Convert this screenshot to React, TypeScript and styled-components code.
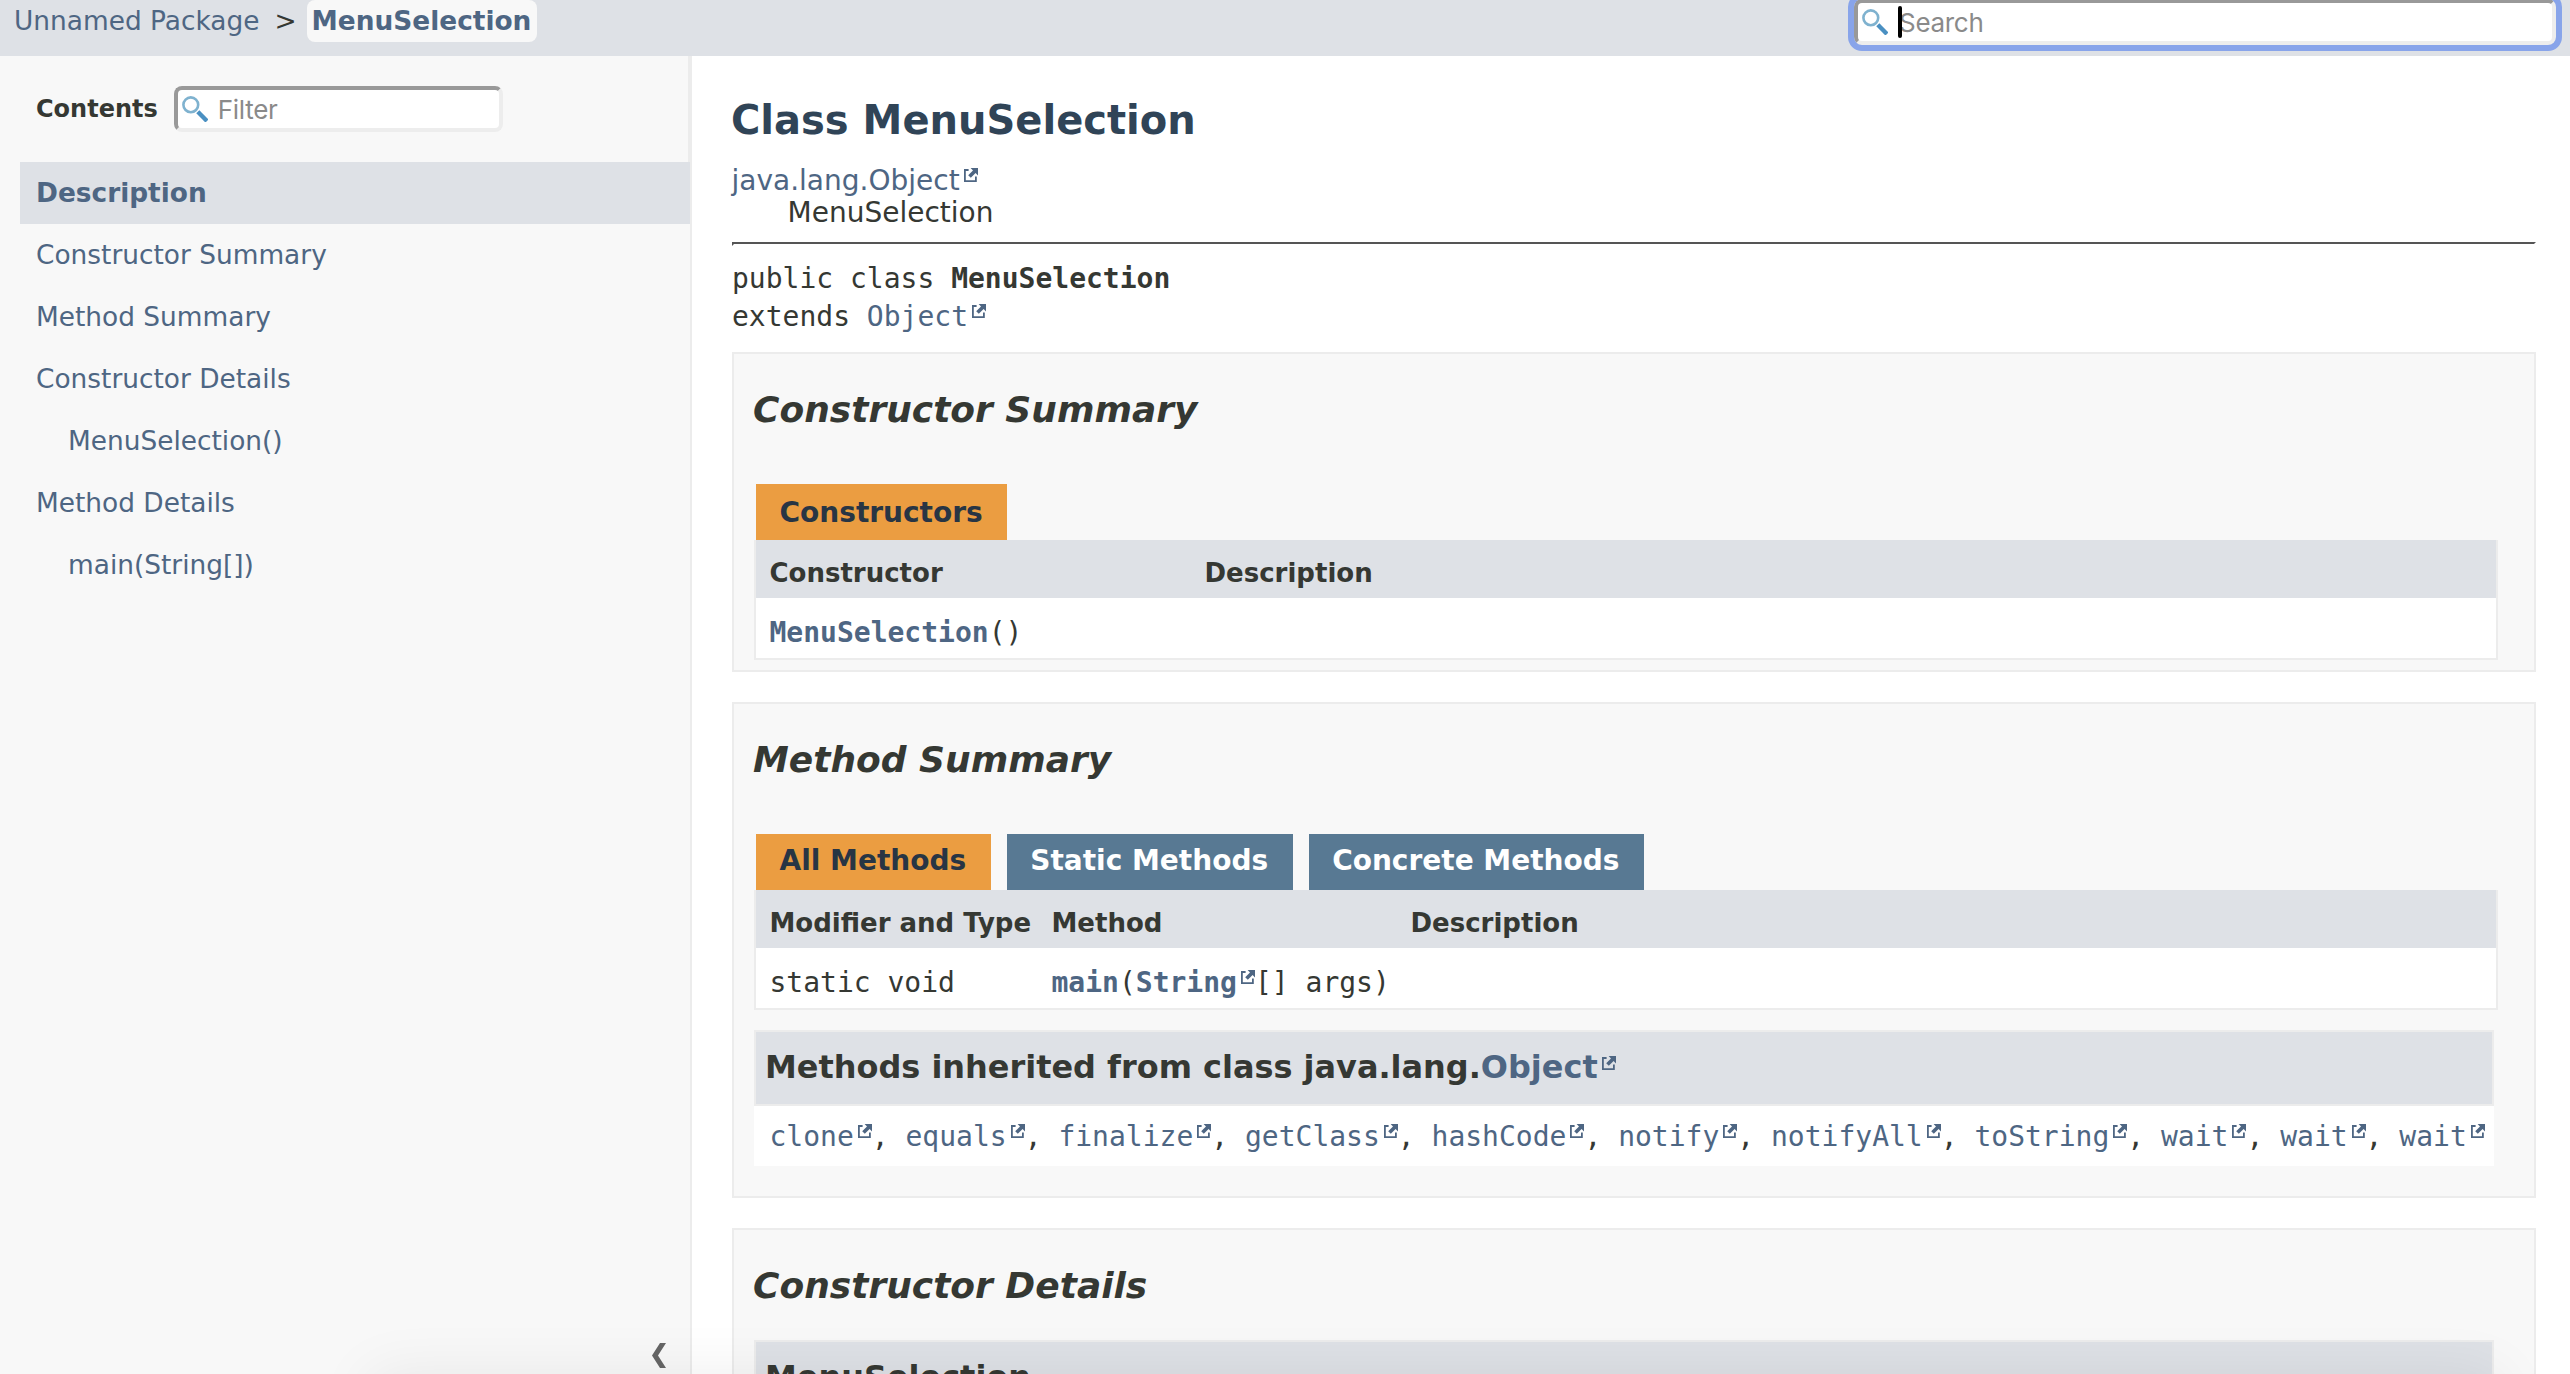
import React from "react";
import styled, { createGlobalStyle } from "styled-components";

const color = {
  text: "#353833",
  link: "#4e6683",
  title: "#304457",
  bar: "#dee1e6",
  panel: "#f8f8f8",
  border: "#ececec",
  tab: "#587993",
  active: "#eb9d41",
  activeText: "#283544",
};
const sans = `"DejaVu Sans", Arial, Helvetica, sans-serif`;
const mono = `"DejaVu Sans Mono", "Liberation Mono", monospace`;

const GlobalStyle = createGlobalStyle`
  * { box-sizing: border-box; }
  body { margin: 0; background: #fff; color: ${color.text}; font-family: ${sans}; font-size: 28px; }
  h1, h2, h3, ul { margin: 0; padding: 0; }
`;

const Page = styled.div`
  height: 1374px;
  overflow: hidden;
  display: flex;
  flex-direction: column;
  position: relative;
`;
const TopBar = styled.header`
  flex: 0 0 56px;
  display: flex;
  justify-content: space-between;
  align-items: flex-start;
  background: ${color.bar};
  padding: 0 14px;
`;
const Crumbs = styled.nav`
  display: flex;
  font-size: 26.4px;
  line-height: 42px;
`;
const Separator = styled.span`
  margin: 0 10px 0 15px;
`;
const CurrentCrumb = styled.a`
  height: 42px;
  padding: 0 6px 0 5px;
  border-radius: 8px;
  background: ${color.panel};
  color: ${color.link};
  font-weight: bold;
`;
const Link = styled.a<{ $bold?: boolean }>`
  color: ${color.link};
  text-decoration: none;
  font-weight: ${(p) => (p.$bold ? "bold" : "inherit")};
`;

const Field = styled.label<{ $width: number; $focused?: boolean }>`
  display: flex;
  align-items: center;
  width: ${(p) => p.$width}px;
  height: 46px;
  margin-top: ${(p) => (p.$focused ? "-1px" : "0")};
  padding-left: 4px;
  background: #fff;
  border: 4px solid;
  border-color: #999 #ededed #ededed #999;
  border-radius: 8px;
  outline: ${(p) => (p.$focused ? "6px solid #88a4ea" : "none")};
`;
const FieldText = styled.span`
  margin-left: 10px;
  padding-top: 2px;
  font-family: Inter, "Liberation Sans", sans-serif;
  font-size: 26px;
  font-weight: normal;
  letter-spacing: -0.3px;
  line-height: 36px;
  color: #8a8a8a;
`;
const Caret = styled.span`
  width: 4px;
  height: 32px;
  margin: 0 -13px 0 10px;
  border-radius: 2px;
  background: #000;
  z-index: 1;
`;

const Body = styled.div`
  flex: 1;
  min-height: 0;
  display: flex;
`;
const Sidebar = styled.aside`
  flex: 0 0 692px;
  display: flex;
  flex-direction: column;
  background: ${color.panel};
  border-right: 2px solid ${color.border};
`;
const TocHeader = styled.div`
  height: 106px;
  display: flex;
  align-items: center;
  gap: 16px;
  padding-left: 36px;
  border-right: 2px solid ${color.border};
  font-size: 24px;
  font-weight: bold;
`;
const Toc = styled.ul`
  list-style: none;
  flex: 1;
  margin-left: 20px;
`;
const TocItem = styled.li<{ $active?: boolean; $nested?: boolean }>`
  height: 62px;
  line-height: 62px;
  padding-left: ${(p) => (p.$nested ? 48 : 16)}px;
  font-size: 26.4px;
  color: ${color.link};
  background: ${(p) => (p.$active ? color.bar : "transparent")};
  font-weight: ${(p) => (p.$active ? "bold" : "normal")};
`;
const CollapseButton = styled.div`
  display: flex;
  justify-content: flex-end;
  padding: 0 24px 6px 0;
`;

const Main = styled.main`
  flex: 1;
  min-width: 0;
  overflow: hidden;
  padding: 40px 34px 0 40px;
`;
const Title = styled.h1`
  margin-left: -1px;
  font-size: 40px;
  line-height: 48px;
  color: ${color.title};
`;
const Inheritance = styled.div`
  margin: 21px 0 0 -0.5px;
  line-height: 32px;
`;
const Indented = styled.div`
  padding-left: 56px;
`;
const Rule = styled.hr`
  height: 4px;
  margin: 13px 0 14px;
  border: 2px solid;
  border-color: #555 #fff #fff #555;
`;
const Signature = styled.div`
  margin: 0 0 16px;
  font-family: ${mono};
  line-height: 38px;
`;
const Section = styled.section<{ $bottom?: number }>`
  margin-bottom: 30px;
  padding: 34px 36px ${(p) => p.$bottom ?? 10}px 18px;
  background: ${color.panel};
  border: 2px solid ${color.border};
`;
const SectionTitle = styled.h2`
  padding-left: 1px;
  font-size: 36px;
  font-style: italic;
  line-height: 43px;
`;
const Tabs = styled.div`
  display: flex;
  gap: 16px;
  margin: 53px 0 0 4px;
`;
const Tab = styled.div<{ $active?: boolean; $line?: number }>`
  height: 56px;
  padding: 0 24.5px 0 23.5px;
  line-height: ${(p) => p.$line ?? 58}px;
  font-weight: bold;
  color: ${(p) => (p.$active ? color.activeText : "#fff")};
  background: ${(p) => (p.$active ? color.active : color.tab)};
`;
const Table = styled.div<{ $columns: string }>`
  display: grid;
  grid-template-columns: ${(p) => p.$columns};
  margin-left: 2px;
  border: 2px solid ${color.border};
  border-top: 0;
  background: #fff;
`;
const HeadCell = styled.div`
  height: 58px;
  padding: 8px 0 0 13.5px;
  line-height: 50px;
  font-size: 26px;
  font-weight: bold;
  background: ${color.bar};
  white-space: nowrap;
`;
const Cell = styled.div`
  height: 60px;
  padding: 9px 0 0 13.5px;
  line-height: 51px;
  font-family: ${mono};
  white-space: nowrap;
`;
const Inherited = styled.div<{ $gap: number }>`
  margin: ${(p) => p.$gap}px 4px 0 2px;
`;
const InheritedTitle = styled.h3`
  height: 76px;
  padding-left: 9px;
  line-height: 70px;
  font-size: 31.95px;
  background: ${color.bar};
  border: 2px solid ${color.border};
`;
const InheritedList = styled.div`
  height: 60px;
  line-height: 62px;
  padding-left: 15.5px;
  font-family: ${mono};
  white-space: nowrap;
  background: #fff;
`;
const ExternalSvg = styled.svg`
  display: inline-block;
  width: 14px;
  height: 14px;
  margin: 0 0 8px 4px;
`;
/* Soft shade that rises from below the window's lower edge. */
const BottomShade = styled.div`
  position: absolute;
  top: 1374px;
  left: 370px;
  right: 70px;
  height: 200px;
  box-shadow: 0 0 56px rgba(0, 0, 0, 0.07);
  pointer-events: none;
`;

const ExternalIcon = () => (
  <ExternalSvg viewBox="0 0 14 14" fill="none">
    <path d="M4.6 2H0.9V13.1H11.9V8.6" stroke={color.link} strokeWidth="1.8" />
    <path d="M6.6 0H14V7.4L11.6 5L6.8 9.8L4.2 7.2L9 2.4Z" fill={color.link} />
  </ExternalSvg>
);
const SearchIcon = () => (
  <svg width="26" height="26" viewBox="0 0 26 26" fill="none">
    <circle cx="8.8" cy="8.8" r="7.4" stroke="#7fb2cf" strokeWidth="2.6" />
    <path d="M15.8 15.8L25 25" stroke="#4a90c2" strokeWidth="4.4" />
  </svg>
);
const External = ({ children, bold }: { children: React.ReactNode; bold?: boolean }) => (
  <Link $bold={bold}>
    {children}
    <ExternalIcon />
  </Link>
);

const toc = [
  { label: "Description", active: true },
  { label: "Constructor Summary" },
  { label: "Method Summary" },
  { label: "Constructor Details" },
  { label: "MenuSelection()", nested: true },
  { label: "Method Details" },
  { label: "main(String[])", nested: true },
];
const inherited = [
  "clone", "equals", "finalize", "getClass", "hashCode", "notify",
  "notifyAll", "toString", "wait", "wait", "wait",
];

export default function App() {
  return (
    <Page>
      <GlobalStyle />
      <TopBar>
        <Crumbs>
          <Link>Unnamed Package</Link>
          <Separator>&gt;</Separator>
          <CurrentCrumb>MenuSelection</CurrentCrumb>
        </Crumbs>
        <Field $width={702} $focused>
          <SearchIcon />
          <Caret />
          <FieldText>Search</FieldText>
        </Field>
      </TopBar>
      <Body>
        <Sidebar>
          <TocHeader>
            Contents
            <Field $width={329}>
              <SearchIcon />
              <FieldText>Filter</FieldText>
            </Field>
          </TocHeader>
          <Toc>
            {toc.map((item) => (
              <TocItem key={item.label} $active={item.active} $nested={item.nested}>
                {item.label}
              </TocItem>
            ))}
          </Toc>
          <CollapseButton>
            <svg width="14" height="25" viewBox="0 0 14 25">
              <path d="M8 0H14L6 12.5L14 25H8L0 12.5Z" fill="#666" />
            </svg>
          </CollapseButton>
        </Sidebar>
        <Main>
          <Title>Class MenuSelection</Title>
          <Inheritance>
            <External>java.lang.Object</External>
            <Indented>MenuSelection</Indented>
          </Inheritance>
          <Rule />
          <Signature>
            public class <b>MenuSelection</b>
            <br />
            extends <External>Object</External>
          </Signature>

          <Section>
            <SectionTitle>Constructor Summary</SectionTitle>
            <Tabs>
              <Tab $active>Constructors</Tab>
            </Tabs>
            <Table $columns="435px 1fr">
              <HeadCell>Constructor</HeadCell>
              <HeadCell>Description</HeadCell>
              <Cell>
                <Link $bold>MenuSelection</Link>()
              </Cell>
              <Cell />
            </Table>
          </Section>

          <Section $bottom={30}>
            <SectionTitle>Method Summary</SectionTitle>
            <Tabs>
              <Tab $active $line={54}>All Methods</Tab>
              <Tab $line={54}>Static Methods</Tab>
              <Tab $line={54}>Concrete Methods</Tab>
            </Tabs>
            <Table $columns="282px 359px 1fr">
              <HeadCell>Modifier and Type</HeadCell>
              <HeadCell>Method</HeadCell>
              <HeadCell>Description</HeadCell>
              <Cell>static void</Cell>
              <Cell>
                <Link $bold>main</Link>(<External bold>String</External>[] args)
              </Cell>
              <Cell />
            </Table>
            <Inherited $gap={20}>
              <InheritedTitle>
                Methods inherited from class java.lang.<External>Object</External>
              </InheritedTitle>
              <InheritedList>
                {inherited.map((name, i) => (
                  <React.Fragment key={i}>
                    {i > 0 && ", "}
                    <External>{name}</External>
                  </React.Fragment>
                ))}
              </InheritedList>
            </Inherited>
          </Section>

          <Section>
            <SectionTitle>Constructor Details</SectionTitle>
            <Inherited $gap={33}>
              <InheritedTitle>MenuSelection</InheritedTitle>
            </Inherited>
          </Section>
        </Main>
      </Body>
      <BottomShade />
    </Page>
  );
}
